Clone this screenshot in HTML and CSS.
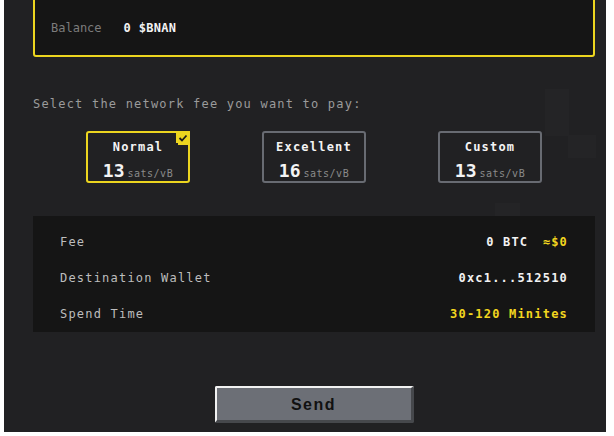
FILE: index.html
```html
<!DOCTYPE html>
<html lang="en">
<head>
    <meta charset="UTF-8">
    <meta name="viewport" content="width=device-width, initial-scale=1.0">
    <title>Send $BNAN</title>
    <link rel="stylesheet" href="styles.css">
</head>
<body>
    <div class="screen">
        <div class="deco deco-a"></div>
        <div class="deco deco-b"></div>
        <div class="deco deco-c"></div>

        <div class="content">
            <div class="balance-box">
                <span class="balance-label">Balance</span>
                <span class="balance-value">0 $BNAN</span>
            </div>

            <p class="prompt">Select the network fee you want to pay:</p>

            <div class="fee-options">
                <button class="fee-option selected" onclick="pickFee(this)">
                    <span class="fee-name">Normal</span>
                    <span class="fee-rate"><b>13</b><small>sats/vB</small></span>
                    <svg class="check" width="14" height="14" viewBox="0 0 14 14">
                        <path d="M0 0H14V14H2V12H0Z" fill="#ecd51f"/>
                        <polyline points="3.5,7 6,9.5 10.5,4.5" fill="none" stroke="#1c1c1c" stroke-width="1.8"/>
                    </svg>
                </button>
                <button class="fee-option" onclick="pickFee(this)">
                    <span class="fee-name">Excellent</span>
                    <span class="fee-rate"><b>16</b><small>sats/vB</small></span>
                </button>
                <button class="fee-option" onclick="pickFee(this)">
                    <span class="fee-name">Custom</span>
                    <span class="fee-rate"><b>13</b><small>sats/vB</small></span>
                </button>
            </div>

            <div class="summary">
                <div class="summary-row">
                    <span class="summary-label">Fee</span>
                    <span class="summary-value">0 BTC <em class="usd">&asymp;$0</em></span>
                </div>
                <div class="summary-row">
                    <span class="summary-label">Destination Wallet</span>
                    <span class="summary-value">0xc1...512510</span>
                </div>
                <div class="summary-row">
                    <span class="summary-label">Spend Time</span>
                    <span class="summary-value yellow">30-120 Minites</span>
                </div>
            </div>

            <div class="send-wrap">
                <button class="send-btn">Send</button>
            </div>
        </div>
    </div>

    <script>
        function pickFee(button) {
            const check = document.querySelector('.fee-option .check');
            document.querySelectorAll('.fee-option').forEach(btn => btn.classList.remove('selected'));
            button.classList.add('selected');
            button.appendChild(check);
        }
    </script>
</body>
</html>
```

FILE: styles.css
```css
body {
    margin: 0;
    background-color: #ffffff;
    font-family: "DejaVu Sans Mono", "Liberation Mono", monospace;
    font-size: 12px;
    color: #eeeeee;
}
.screen {
    position: relative;
    margin-left: 4px;
    width: 602px;
    height: 432px;
    background-color: #212123;
    overflow: hidden;
}
.deco {
    position: absolute;
    background-color: #242426;
}
.deco-a {
    left: 541px;
    top: 89px;
    width: 24px;
    height: 47px;
}
.deco-b {
    left: 564px;
    top: 135px;
    width: 28px;
    height: 23px;
}
.deco-c {
    left: 491px;
    top: 203px;
    width: 25px;
    height: 13px;
}
.content {
    position: relative;
    margin-left: 29px;
    width: 562px;
}

.balance-box {
    margin-top: -10px;
    padding: 28px 16px 19px;
    background-color: #151515;
    border: 2px solid #ecd51f;
    border-radius: 3px;
    display: flex;
    align-items: center;
    line-height: 16px;
}
.balance-label {
    color: #7c7c7c;
    margin-right: 22px;
}
.balance-value {
    color: #f2f2f2;
    font-weight: bold;
    letter-spacing: 0.3px;
}

.prompt {
    margin: 39px 0 0;
    line-height: 16px;
    color: #9b9b9b;
    letter-spacing: 1.2px;
}

.fee-options {
    margin-top: 19px;
    display: flex;
    justify-content: center;
    gap: 72px;
}
.fee-option {
    position: relative;
    width: 104px;
    height: 52px;
    padding: 6px 0 0;
    background: none;
    border: 2px solid #686b72;
    border-radius: 3px;
    font-family: inherit;
    display: flex;
    flex-direction: column;
    align-items: center;
    gap: 6px;
    cursor: pointer;
}
.fee-option.selected {
    border-color: #ecd51f;
}
.fee-name {
    line-height: 16px;
    font-size: 12px;
    font-weight: bold;
    color: #f4f4f4;
    letter-spacing: 1.2px;
}
.fee-rate {
    display: flex;
    align-items: baseline;
    line-height: 20px;
}
.fee-rate b {
    font-size: 18px;
    color: #f4f4f4;
    margin-right: 3px;
}
.fee-rate small {
    font-size: 10px;
    color: #8a8a8a;
    letter-spacing: 0.5px;
}
.check {
    position: absolute;
    top: -2px;
    right: -2px;
}

.summary {
    margin-top: 33px;
    height: 116px;
    padding: 8px 27px 0;
    box-sizing: border-box;
    background-color: #151515;
}
.summary-row {
    display: flex;
    justify-content: space-between;
    align-items: center;
    height: 36px;
    letter-spacing: 1.2px;
}
.summary-label {
    color: #bdbdbd;
}
.summary-value {
    color: #f2f2f2;
    font-weight: bold;
}
.usd {
    font-style: normal;
    color: #f2d61f;
    margin-left: 6px;
}
.yellow {
    color: #f2d61f;
}

.send-wrap {
    margin-top: 54px;
    display: flex;
    justify-content: center;
}
.send-btn {
    width: 199px;
    height: 37px;
    padding-top: 3px;
    background-color: #6c6f76;
    border-top: 2px solid #f2f2f2;
    border-left: 2px solid #f2f2f2;
    border-bottom: 3px solid #46484c;
    border-right: 3px solid #46484c;
    border-radius: 2px;
    font-family: "Liberation Sans", Arial, sans-serif;
    font-size: 16px;
    font-weight: bold;
    letter-spacing: 1.5px;
    color: #111111;
    cursor: pointer;
}
```
